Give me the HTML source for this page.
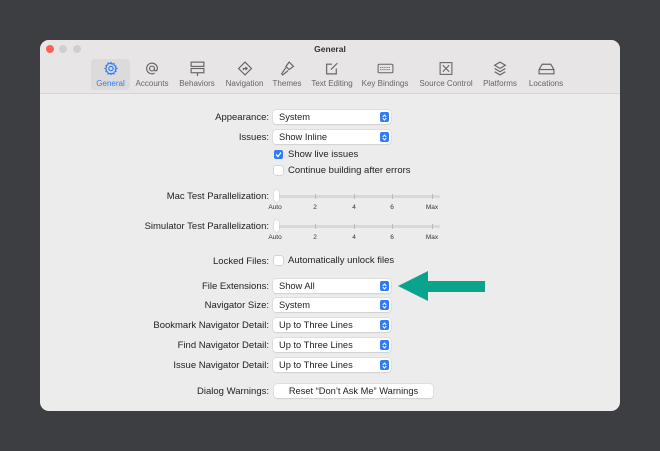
<!DOCTYPE html><html><head><style>
body{margin:0;width:660px;height:451px;background:#3c3e41;font-family:"Liberation Sans",sans-serif;position:relative;overflow:hidden}
.win{position:absolute;left:40px;top:40px;width:580px;height:371px;background:#ececec;border-radius:9px;overflow:hidden}
.bar{position:absolute;left:0;top:0;width:580px;height:53px;background:#e7e5e5;border-bottom:1px solid #d6d6d6}
.dot{position:absolute;top:5px;width:8px;height:8px;border-radius:50%;background:#d0cfcf}
.title{position:absolute;top:4px;width:100%;text-align:center;font-size:8.5px;font-weight:bold;color:#333}
.tb{position:absolute;top:21px;text-align:center;font-size:8px;color:#666;white-space:nowrap}
.tb svg{display:block;margin:0 auto 3px}
.lab{position:absolute;right:351px;font-size:9.5px;color:#222;white-space:nowrap;margin-top:1px}
.pop{position:absolute;left:233px;width:118px;height:14px;background:#fff;border-radius:3px;box-shadow:0 0 0 0.5px #cfcfcf,0 1px 1px rgba(0,0,0,.1);font-size:9.3px;color:#222;line-height:14px;text-indent:6px;white-space:nowrap}
.pop i{position:absolute;right:2px;top:2px;width:9px;height:10px;background:#2f7cf6;border-radius:2px}
.pop i:before,.pop i:after{content:"";position:absolute;left:3px;width:2px;height:2px;border:solid #fff;border-width:1px 0 0 1px}
.pop i:before{top:2.5px;transform:rotate(45deg)}
.pop i:after{top:5px;transform:rotate(225deg)}
.cb{position:absolute;left:234px;width:9px;height:9px;border-radius:2px;background:#fff;box-shadow:0 0 0 0.5px #bbb}
.ct{position:absolute;left:248px;font-size:9.5px;color:#222;white-space:nowrap}
.sl{position:absolute;left:235px;width:165px;height:3px;background:#d8d8d8;border-radius:2px}
.tick{position:absolute;width:1px;height:5px;background:#bbb;top:-1px}
.knob{position:absolute;left:-1px;top:-5px;width:5px;height:12px;background:#fff;border-radius:3px;box-shadow:0 0 1px #999}
.tl{position:absolute;font-size:6.5px;color:#333;transform:translateX(-50%)}
</style></head><body>
<div class="win">
<div class="bar">
<div class="dot" style="left:6px;background:#fe5f57"></div><div class="dot" style="left:19px"></div><div class="dot" style="left:33px"></div>
<div class="title">General</div>
<div style="position:absolute;left:51px;top:19px;width:39px;height:31px;background:#dcdada;border-radius:4px"></div>
<div class="tb" style="left:51px;width:39px;color:#2f7cf6"><svg width="16" height="15" viewBox="0 0 14 14" fill="none" stroke="#2f7cf6" stroke-width="1.1"><circle cx="7" cy="7" r="2"/><path d="M7 1.5l1 1.5 1.7-.6.3 1.8 1.7.6-.6 1.7L12.5 7l-1.4 1 .6 1.7-1.7.6-.3 1.8L8 11.5 7 12.5 6 11.5l-1.7.6-.3-1.8-1.7-.6.6-1.7L1.5 7l1.4-1-.6-1.7 1.7-.6.3-1.8L6 2.5z"/></svg>General</div>
<div class="tb" style="left:94px;width:36px"><svg width="16" height="15" viewBox="0 0 14 14" fill="none" stroke="#666" stroke-width="1.1"><circle cx="7" cy="7" r="2.3"/><path d="M9.3 7v1.2c0 1.5 2.7 1.5 2.7-1.2A5 5 0 1 0 9.5 11.3"/></svg>Accounts</div>
<div class="tb" style="left:135px;width:44px"><svg width="17" height="15" viewBox="0 0 16 14" fill="none" stroke="#666" stroke-width="1.1"><rect x="2" y="1" width="12" height="4"/><rect x="2" y="7" width="12" height="4"/><path d="M8 11v3"/></svg>Behaviors</div>
<div class="tb" style="left:182px;width:45px"><svg width="16" height="15" viewBox="0 0 14 14" fill="none" stroke="#666" stroke-width="1.1"><path d="M7 1l6 6-6 6-6-6z M5.5 8.5V7h3M7.5 5.5L9 7 7.5 8.5"/></svg>Navigation</div>
<div class="tb" style="left:229px;width:36px"><svg width="16" height="15" viewBox="0 0 14 14" fill="none" stroke="#666" stroke-width="1.1"><path d="M9 1l4 4-4 3-3-3zM6 6L2 12l1 1 5-4"/></svg>Themes</div>
<div class="tb" style="left:268px;width:48px"><svg width="16" height="15" viewBox="0 0 14 14" fill="none" stroke="#666" stroke-width="1.1"><path d="M11 7v5H2V3h5M6 8l6-6"/></svg>Text Editing</div>
<div class="tb" style="left:320px;width:50px"><svg width="19" height="15" viewBox="0 0 18 14" fill="none" stroke="#666" stroke-width="1"><rect x="2" y="3" width="14" height="8" rx="1"/><path d="M4 6h10M4 8h10" stroke-dasharray="1 1"/></svg>Key Bindings</div>
<div class="tb" style="left:376px;width:60px"><svg width="16" height="15" viewBox="0 0 14 14" fill="none" stroke="#666" stroke-width="1"><rect x="1.5" y="1.5" width="11" height="11"/><path d="M4 4l6 6M10 4l-6 6"/></svg>Source Control</div>
<div class="tb" style="left:440px;width:40px"><svg width="16" height="15" viewBox="0 0 14 14" fill="none" stroke="#666" stroke-width="1.1"><path d="M7 1l5 3-5 3-5-3zM2 7l5 3 5-3M2 10l5 3 5-3"/></svg>Platforms</div>
<div class="tb" style="left:484px;width:44px"><svg width="17" height="15" viewBox="0 0 16 14" fill="none" stroke="#666" stroke-width="1.1"><path d="M4 3h8l3 5v4H1V8zM1 8h14"/></svg>Locations</div>
</div>

<div class="lab" style="top:71px">Appearance:</div><div class="pop" style="top:70px">System<i></i></div>
<div class="lab" style="top:91px">Issues:</div><div class="pop" style="top:90px">Show Inline<i></i></div>
<div class="cb" style="top:110px;background:#2f7cf6;box-shadow:none"><svg width="9" height="9" viewBox="0 0 9 9" style="position:absolute;top:0;left:0"><path d="M2 4.5l2 2 3-4" stroke="#fff" stroke-width="1.3" fill="none"/></svg></div><div class="ct" style="top:109px">Show live issues</div>
<div class="cb" style="top:126px"></div><div class="ct" style="top:125px">Continue building after errors</div>

<div class="lab" style="top:150px">Mac Test Parallelization:</div>
<div class="sl" style="top:155px"><div class="tick" style="left:40px"></div><div class="tick" style="left:79px"></div><div class="tick" style="left:117px"></div><div class="tick" style="left:157px"></div><div class="knob"></div></div>
<div class="tl" style="top:164px;left:235px">Auto</div><div class="tl" style="top:164px;left:275px">2</div><div class="tl" style="top:164px;left:314px">4</div><div class="tl" style="top:164px;left:352px">6</div><div class="tl" style="top:164px;left:392px">Max</div>

<div class="lab" style="top:180px">Simulator Test Parallelization:</div>
<div class="sl" style="top:185px"><div class="tick" style="left:40px"></div><div class="tick" style="left:79px"></div><div class="tick" style="left:117px"></div><div class="tick" style="left:157px"></div><div class="knob"></div></div>
<div class="tl" style="top:194px;left:235px">Auto</div><div class="tl" style="top:194px;left:275px">2</div><div class="tl" style="top:194px;left:314px">4</div><div class="tl" style="top:194px;left:352px">6</div><div class="tl" style="top:194px;left:392px">Max</div>

<div class="lab" style="top:215px">Locked Files:</div><div class="cb" style="top:216px"></div><div class="ct" style="top:215px">Automatically unlock files</div>
<div class="lab" style="top:240px">File Extensions:</div><div class="pop" style="top:239px">Show All<i></i></div>
<div class="lab" style="top:259px">Navigator Size:</div><div class="pop" style="top:258px">System<i></i></div>
<div class="lab" style="top:279px">Bookmark Navigator Detail:</div><div class="pop" style="top:278px">Up to Three Lines<i></i></div>
<div class="lab" style="top:299px">Find Navigator Detail:</div><div class="pop" style="top:298px">Up to Three Lines<i></i></div>
<div class="lab" style="top:319px">Issue Navigator Detail:</div><div class="pop" style="top:318px">Up to Three Lines<i></i></div>
<div class="lab" style="top:345px">Dialog Warnings:</div>
<div class="pop" style="top:344px;left:234px;width:159px;text-indent:0;text-align:center">Reset “Don’t Ask Me” Warnings</div>
</div>
<svg width="660" height="451" style="position:absolute;left:0;top:0"><path d="M398 286L428 271V281H485V292H428V301Z" fill="#0aa38b"/></svg>
</body></html>
